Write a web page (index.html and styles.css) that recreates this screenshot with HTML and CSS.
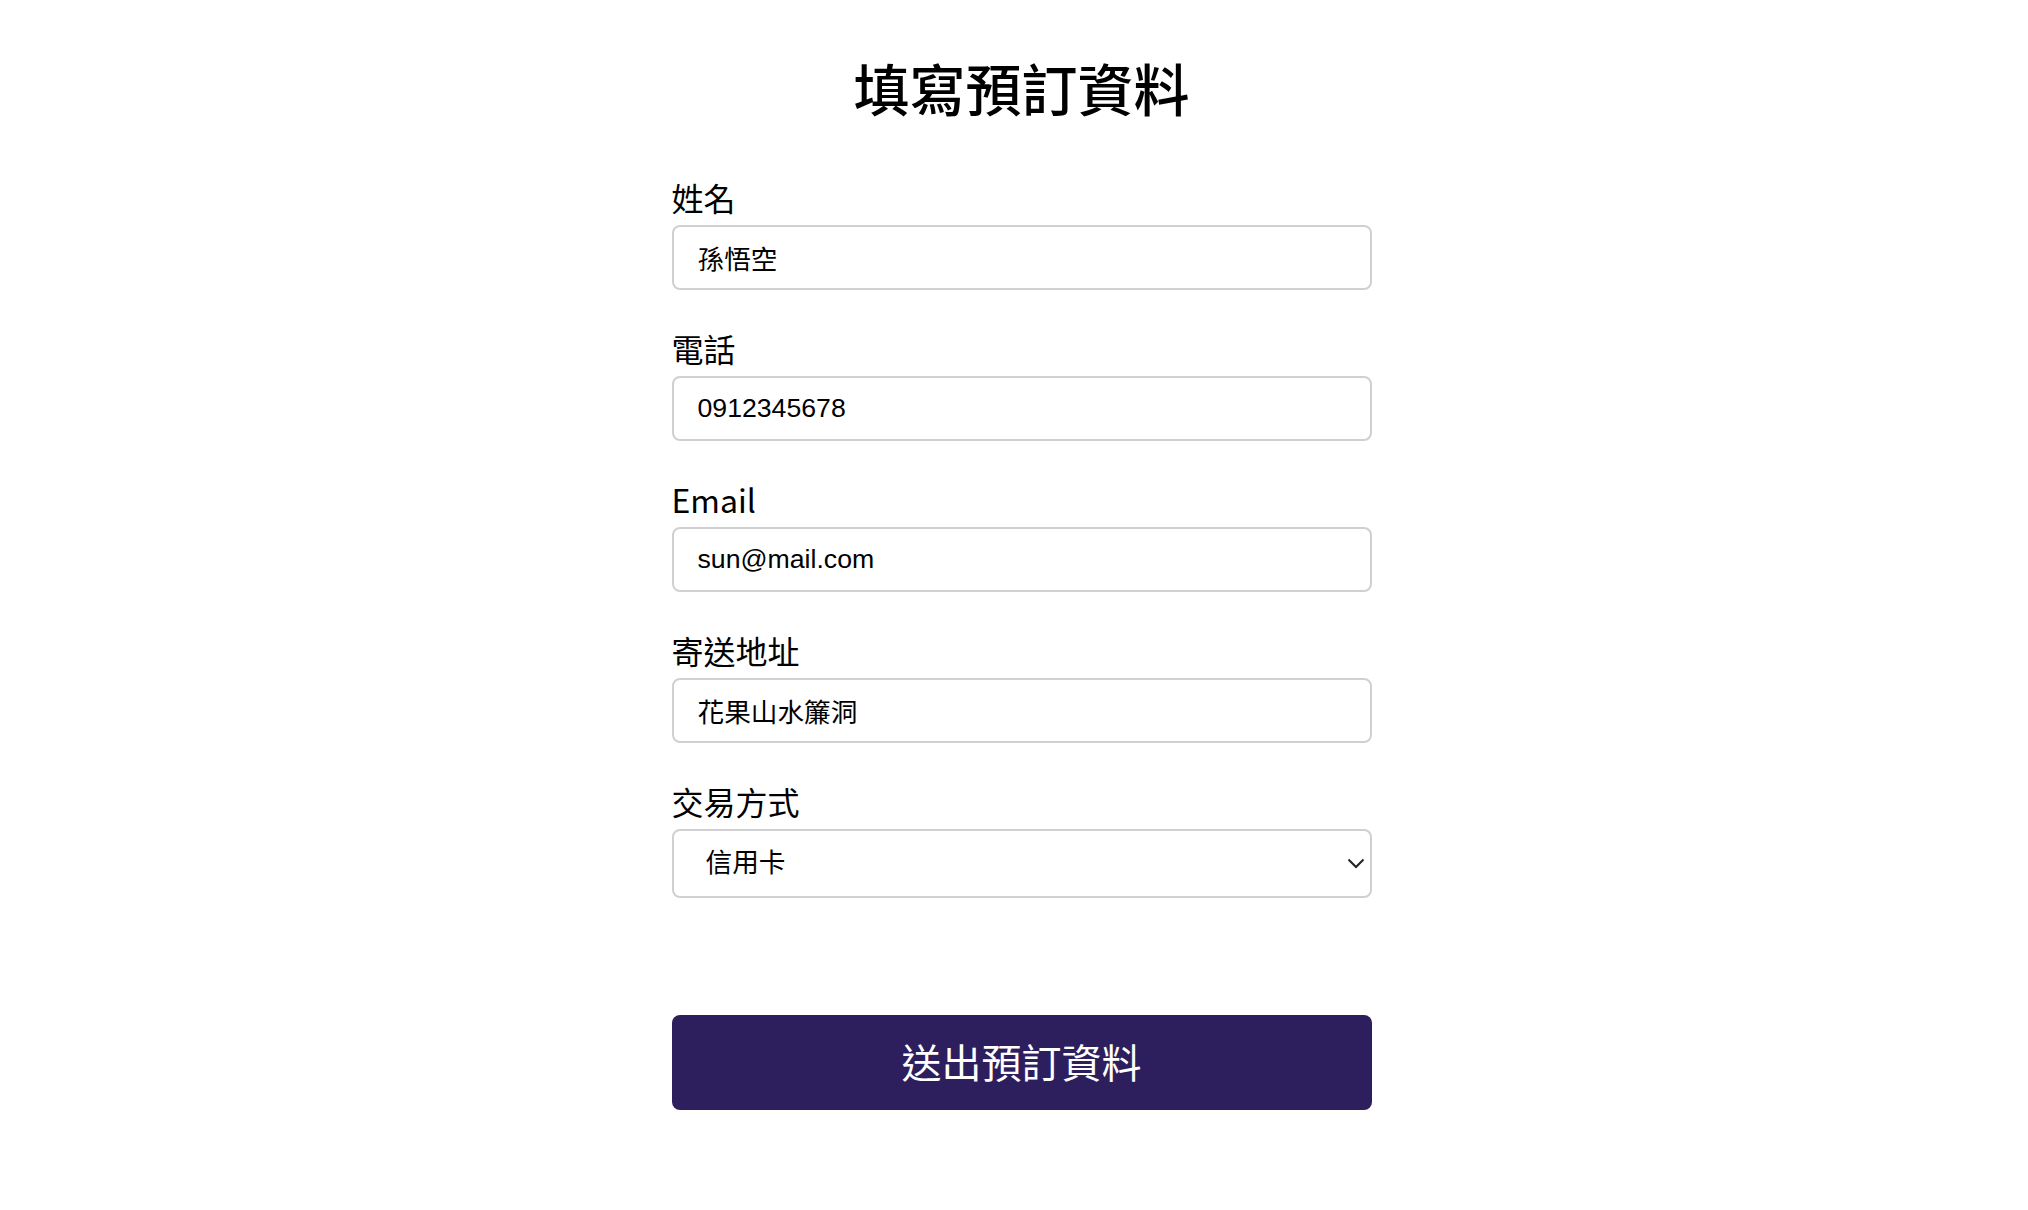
FILE: index.html
```html
<!DOCTYPE html>
<html lang="zh-Hant">
<head>
<meta charset="utf-8">
<title>填寫預訂資料</title>
<link rel="stylesheet" href="styles.css">
</head>
<body>
<main class="page">
  <h1 class="title">填寫預訂資料</h1>
  <form class="form">
    <div class="field">
      <label class="label" for="name">姓名</label>
      <input class="input" id="name" type="text" value="孫悟空">
    </div>
    <div class="field">
      <label class="label" for="tel">電話</label>
      <input class="input" id="tel" type="tel" value="0912345678">
    </div>
    <div class="field">
      <label class="label" for="email">Email</label>
      <input class="input" id="email" type="email" value="sun@mail.com">
    </div>
    <div class="field">
      <label class="label" for="addr">寄送地址</label>
      <input class="input" id="addr" type="text" value="花果山水簾洞">
    </div>
    <div class="field">
      <label class="label" for="pay">交易方式</label>
      <div class="select-wrap">
        <select class="select" id="pay">
          <option>信用卡</option>
          <option>ATM 轉帳</option>
          <option>貨到付款</option>
        </select>
        <svg class="chevron" width="18" height="11" viewBox="0 0 18 11" aria-hidden="true">
          <path d="M1.5 1.5 L9 9 L16.5 1.5" fill="none" stroke="#222" stroke-width="2"/>
        </svg>
      </div>
    </div>
    <button class="submit" type="button">送出預訂資料</button>
  </form>
</main>
</body>
</html>
```

FILE: styles.css
```css
* {
  box-sizing: border-box;
}

html, body {
  margin: 0;
  padding: 0;
  background: #ffffff;
}

body {
  font-family: "Noto Sans CJK TC", "Noto Sans", sans-serif;
  color: #000;
  padding-left: 15px;
}

.page {
  width: 700px;
  margin: 0 auto;
  padding-top: 47px;
}

.title {
  margin: 0 0 50px;
  font-size: 56px;
  line-height: 80px;
  font-weight: 500;
  text-align: center;
}

.form {
  display: flex;
  flex-direction: column;
  gap: 38px;
}

.field {
  display: flex;
  flex-direction: column;
}

.label {
  display: block;
  font-size: 32px;
  line-height: 40px;
  margin-bottom: 8px;
}

.input,
.select {
  width: 100%;
  height: 65px;
  border: 2px solid #d0d0d3;
  border-radius: 8px;
  padding: 0 24px;
  font-family: "Liberation Sans", Arial, "Noto Sans CJK TC", sans-serif;
  font-size: 26.67px;
  color: #000;
  background: #fff;
  outline: none;
}

.select-wrap {
  position: relative;
}

.select {
  height: 69px;
  padding-left: 32px;
  padding-bottom: 2px;
  -webkit-appearance: none;
  appearance: none;
}

.chevron {
  position: absolute;
  right: 7px;
  top: 29px;
  pointer-events: none;
}

.submit {
  margin-top: 79px;
  width: 100%;
  height: 95px;
  border: none;
  border-radius: 8px;
  background: #2d1f5d;
  color: #fff;
  font-family: "Noto Sans CJK TC", sans-serif;
  font-size: 40px;
  line-height: 1;
  padding: 0 0 4px;
  cursor: pointer;
}
```
